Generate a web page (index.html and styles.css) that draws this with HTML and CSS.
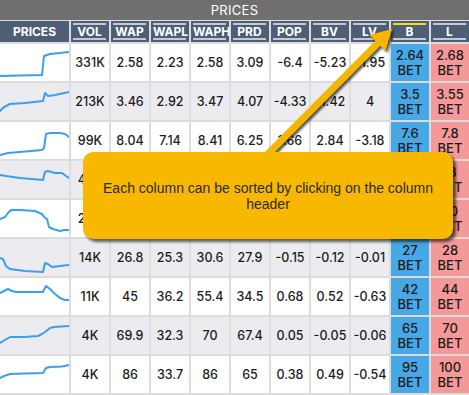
FILE: index.html
```
<!DOCTYPE html>
<html>
<head>
<meta charset="utf-8">
<link rel="stylesheet" href="styles.css">
</head>
<body>
<div class="board">
  <div class="title">PRICES</div>
  <div class="grid">
    <div class="row head">
      <div class="hcell first"><span>PRICES</span></div>
      <div class="hcell"><span>VOL</span></div>
      <div class="hcell"><span>WAP</span></div>
      <div class="hcell"><span>WAPL</span></div>
      <div class="hcell"><span>WAPH</span></div>
      <div class="hcell"><span>PRD</span></div>
      <div class="hcell"><span>POP</span></div>
      <div class="hcell"><span>BV</span></div>
      <div class="hcell"><span>LV</span></div>
      <div class="hcell sorted"><span>B</span></div>
      <div class="hcell"><span>L</span></div>
    </div>

    <div class="row">
      <div class="cell spark"><svg viewBox="0 0 69 37"><polyline points="0,32 20,31.5 42,31 44,12 50,10 60,9 69,8"/></svg></div>
      <div class="cell">331K</div><div class="cell">2.58</div><div class="cell">2.23</div><div class="cell">2.58</div><div class="cell">3.09</div><div class="cell">-6.4</div><div class="cell">-5.23</div><div class="cell">-1.95</div>
      <div class="cell bet b">2.64<br>BET</div><div class="cell bet l">2.68<br>BET</div>
    </div>
    <div class="row alt">
      <div class="cell spark"><svg viewBox="0 0 69 37"><polyline points="0,28 4,24 10,21 25,20 43,18 45,10 48,13 55,12 69,9"/></svg></div>
      <div class="cell">213K</div><div class="cell">3.46</div><div class="cell">2.92</div><div class="cell">3.47</div><div class="cell">4.07</div><div class="cell">-4.33</div><div class="cell">-1.42</div><div class="cell">4</div>
      <div class="cell bet b">3.5<br>BET</div><div class="cell bet l">3.55<br>BET</div>
    </div>
    <div class="row">
      <div class="cell spark"><svg viewBox="0 0 69 37"><polyline points="0,33 8,31 20,30 42,28 44,26 46,12 50,11 60,11 65,12 69,15"/></svg></div>
      <div class="cell">99K</div><div class="cell">8.04</div><div class="cell">7.14</div><div class="cell">8.41</div><div class="cell">6.25</div><div class="cell">1.66</div><div class="cell">2.84</div><div class="cell">-3.18</div>
      <div class="cell bet b">7.6<br>BET</div><div class="cell bet l">7.8<br>BET</div>
    </div>
    <div class="row alt">
      <div class="cell spark"><svg viewBox="0 0 69 37"><polyline points="0,14 6,15 20,17 43,19 45,11 48,10 55,12 62,12 66,15 69,17"/></svg></div>
      <div class="cell">45K</div><div class="cell">12.1</div><div class="cell">10.8</div><div class="cell">12.4</div><div class="cell">11.9</div><div class="cell">-0.42</div><div class="cell">-0.31</div><div class="cell">-0.2</div>
      <div class="cell bet b">12<br>BET</div><div class="cell bet l">13<br>BET</div>
    </div>
    <div class="row">
      <div class="cell spark"><svg viewBox="0 0 69 37"><polyline points="0,19 5,17 8,13 11,10 20,10 35,11 42,14 44,17 47,19 49,27 53,29 60,31 64,30 69,30"/></svg></div>
      <div class="cell">24K</div><div class="cell">18.4</div><div class="cell">16.2</div><div class="cell">19.1</div><div class="cell">18.7</div><div class="cell">-0.28</div><div class="cell">-0.19</div><div class="cell">-0.07</div>
      <div class="cell bet b">19<br>BET</div><div class="cell bet l">20<br>BET</div>
    </div>
    <div class="row alt">
      <div class="cell spark"><svg viewBox="0 0 69 37"><polyline points="0,19 3,20 6,27 10,30 25,32 43,33 45,24 48,25 52,28 60,27 69,26"/></svg></div>
      <div class="cell">14K</div><div class="cell">26.8</div><div class="cell">25.3</div><div class="cell">30.6</div><div class="cell">27.9</div><div class="cell">-0.15</div><div class="cell">-0.12</div><div class="cell">-0.01</div>
      <div class="cell bet b">27<br>BET</div><div class="cell bet l">28<br>BET</div>
    </div>
    <div class="row">
      <div class="cell spark"><svg viewBox="0 0 69 37"><polyline points="0,15 4,13 8,11 12,13 16,14 30,14 43,14 46,8 50,11 55,16 60,20 65,22 69,22"/></svg></div>
      <div class="cell">11K</div><div class="cell">45</div><div class="cell">36.2</div><div class="cell">55.4</div><div class="cell">34.5</div><div class="cell">0.68</div><div class="cell">0.52</div><div class="cell">-0.63</div>
      <div class="cell bet b">42<br>BET</div><div class="cell bet l">44<br>BET</div>
    </div>
    <div class="row alt">
      <div class="cell spark"><svg viewBox="0 0 69 37"><polyline points="0,26 5,23 10,20 25,20 38,19 42,17 45,15 50,11 54,10 69,9"/></svg></div>
      <div class="cell">4K</div><div class="cell">69.9</div><div class="cell">32.3</div><div class="cell">70</div><div class="cell">67.4</div><div class="cell">0.05</div><div class="cell">-0.05</div><div class="cell">-0.06</div>
      <div class="cell bet b">65<br>BET</div><div class="cell bet l">70<br>BET</div>
    </div>
    <div class="row">
      <div class="cell spark"><svg viewBox="0 0 69 37"><polyline points="0,22 4,20 10,18 25,17.5 43,17 46,12 50,11 62,10.5 69,9"/></svg></div>
      <div class="cell">4K</div><div class="cell">86</div><div class="cell">33.7</div><div class="cell">86</div><div class="cell">65</div><div class="cell">0.38</div><div class="cell">0.49</div><div class="cell">-0.54</div>
      <div class="cell bet b">95<br>BET</div><div class="cell bet l">100<br>BET</div>
    </div>
  </div>

  <svg class="arrow" viewBox="0 0 469 395" width="469" height="395">
    <line x1="262" y1="160" x2="380" y2="41"/>
    <polygon points="392,29 385.5,51 369.5,35"/>
  </svg>
  <div class="callout">Each column can be sorted by clicking on the column header</div>
</div>
</body>
</html>
```

FILE: styles.css
```
* { box-sizing: border-box; }
html, body { margin: 0; padding: 0; }
body {
  width: 469px;
  height: 395px;
  overflow: hidden;
  background: #dcdcdc;
  font-family: Inter, "Noto Sans", sans-serif;
}
.board {
  position: relative;
  width: 469px;
  height: 395px;
  background: #dcdcdc;
}
.title {
  height: 20px;
  margin-bottom: 1px;
  background: #6f6f6f;
  color: #ffffff;
  font-size: 13px;
  line-height: 20px;
  text-align: center;
  letter-spacing: 0.3px;
}
.grid {
  display: grid;
  grid-template-columns: 69px repeat(10, 38px);
  grid-template-rows: 21px repeat(9, 37px);
  column-gap: 2px;
  row-gap: 2px;
}
.row { display: contents; }
.hcell {
  background: #4e5e76;
  color: #ffffff;
  font-size: 12px;
  font-weight: 700;
  padding: 2px 3px 2px 2px;
  overflow: hidden;
}
.hcell span {
  display: block;
  height: 17px;
  border-top: 2px solid #c5c9d0;
  border-bottom: 2px solid #c5c9d0;
  line-height: 13px;
  text-align: center;
  white-space: nowrap;
}
.hcell.sorted span { border-top-color: #f2dc14; }
.hcell.first { padding: 2px 4px; }
.hcell.first span { border: none; line-height: 17px; }
.cell {
  background: #ffffff;
  display: flex;
  align-items: center;
  justify-content: center;
  text-align: center;
  font-size: 12.5px;
  font-weight: 500;
  color: #1c1c1c;
  overflow: hidden;
  white-space: nowrap;
}
.alt .cell { background: #ececf0; }
.cell.spark { align-items: stretch; }
.spark svg { width: 69px; height: 37px; display: block; }
.spark polyline {
  fill: none;
  stroke: #3a9ff0;
  stroke-width: 2;
  stroke-linejoin: round;
  stroke-linecap: round;
}
.cell.bet { line-height: 15px; font-size: 13px; }
.cell.b, .alt .cell.b { background: #46a8e6; }
.cell.l, .alt .cell.l { background: #f59898; }
.arrow {
  position: absolute;
  left: 0;
  top: 0;
  filter: drop-shadow(2px 2px 1px rgba(0, 0, 0, 0.65));
}
.arrow line {
  stroke: #f6b500;
  stroke-width: 7;
}
.arrow polygon { fill: #f6b500; }
.callout {
  position: absolute;
  left: 83px;
  top: 152px;
  width: 370px;
  height: 87px;
  background: #f9b800;
  border-radius: 10px;
  box-shadow: 3px 3px 3px rgba(0, 0, 0, 0.6);
  display: flex;
  align-items: center;
  justify-content: center;
  padding: 0 18px;
  text-align: center;
  font-family: "Liberation Sans", Arial, sans-serif;
  font-size: 14px;
  line-height: 16px;
  color: #2a2a2a;
}
```
